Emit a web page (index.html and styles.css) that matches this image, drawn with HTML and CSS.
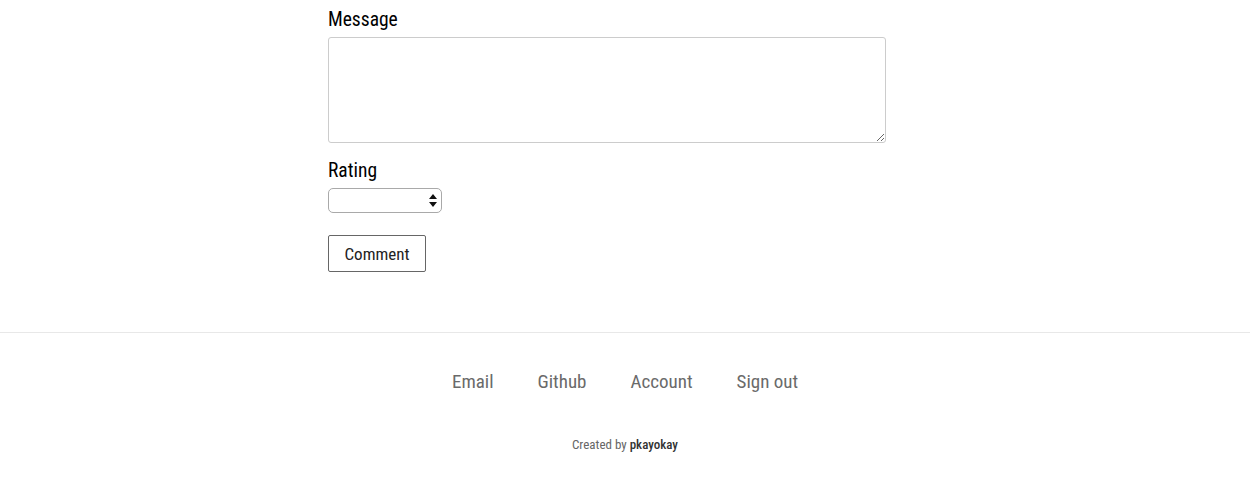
FILE: index.html
```html
<!DOCTYPE html>
<html>
<head>
<meta charset="utf-8">
<link rel="stylesheet" href="styles.css">
</head>
<body>
<main class="main">
  <form class="form">
    <label class="label" for="msg">Message</label>
    <textarea id="msg" class="textarea"></textarea>
    <label class="label label-rating" for="rating">Rating</label>
    <div class="select-wrap">
      <select id="rating" class="select"><option></option></select>
      <svg class="select-arrows" width="8" height="13" viewBox="0 0 8 13"><path d="M4 0 L8 5 L0 5 Z M0 8 L8 8 L4 13 Z" fill="#111"/></svg>
    </div>
    <button type="button" class="button">Comment</button>
  </form>
</main>
<footer class="footer">
  <nav class="links">
    <a href="#">Email</a>
    <a href="#">Github</a>
    <a href="#">Account</a>
    <a href="#">Sign out</a>
  </nav>
  <p class="credit">Created by <strong>pkayokay</strong></p>
</footer>
</body>
</html>
```
FILE: styles.css
```css
* { box-sizing: border-box; }
html, body { margin: 0; padding: 0; background: #fff; }
body { font-family: "Roboto Condensed", Roboto, "Liberation Sans", sans-serif; font-stretch: 87.5%; color: #000; }
.main { padding: 8px 0 60px 328px; }
.form { width: 558px; display: flex; flex-direction: column; align-items: flex-start; }
.label { font-size: 19.5px; font-weight: 400; line-height: 24px; margin-bottom: 5px; }
.label-rating { margin-top: 16px; }
.textarea { width: 558px; height: 106px; border: 1px solid #ccc; border-radius: 3px; resize: vertical; font: inherit; }
.select-wrap { position: relative; width: 114px; height: 25px; }
.select { appearance: none; -webkit-appearance: none; width: 114px; height: 25px; border: 1px solid #a9a9a9; border-radius: 5px; background: #fff; display: block; }
.select-arrows { position: absolute; right: 5px; top: 6px; pointer-events: none; }
.button { margin-top: 22px; width: 98px; height: 37px; background: #fff; border: 1px solid #666; border-radius: 2px; font-family: inherit; font-stretch: 87.5%; font-size: 17px; color: #222; }
.footer { border-top: 1px solid #e8e8e8; padding-top: 37px; text-align: center; }
.links { display: flex; justify-content: center; gap: 44px; }
.links a { color: #6a6a6a; text-decoration: none; font-size: 19px; line-height: 24px; }
.credit { margin: 43px 0 0; font-size: 13px; color: #666; }
.credit strong { color: #333; font-weight: 500; }
```
